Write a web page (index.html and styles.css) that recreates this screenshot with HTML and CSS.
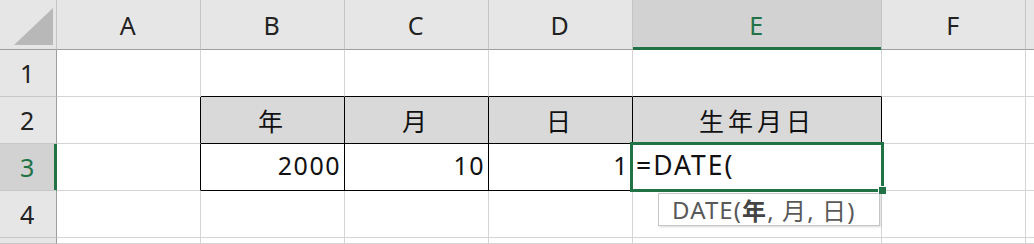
FILE: index.html
```html
<!DOCTYPE html>
<html lang="ja">
<head>
    <meta charset="UTF-8">
    <title>DATE</title>
    <link rel="stylesheet" href="styles.css">
</head>
<body>

    <div class="sheet">
        <!-- column headers -->
        <div class="cell corner">
            <svg width="56" height="49" viewBox="0 0 56 49"><polygon points="53,8 53,45 14,45" fill="#b8b8b8"/></svg>
        </div>
        <div class="cell col-head">A</div>
        <div class="cell col-head">B</div>
        <div class="cell col-head">C</div>
        <div class="cell col-head">D</div>
        <div class="cell col-head sel-col">E</div>
        <div class="cell col-head">F</div>
        <div class="cell col-head"></div>

        <!-- row 1 -->
        <div class="cell row-head">1</div>
        <div class="cell"></div>
        <div class="cell line-b"></div>
        <div class="cell line-b"></div>
        <div class="cell line-b"></div>
        <div class="cell line-b"></div>
        <div class="cell"></div>
        <div class="cell"></div>

        <!-- row 2 -->
        <div class="cell row-head">2</div>
        <div class="cell line-r"></div>
        <div class="cell th line-r line-b">年</div>
        <div class="cell th line-r line-b">月</div>
        <div class="cell th line-r line-b">日</div>
        <div class="cell th line-r line-b">生年月日</div>
        <div class="cell"></div>
        <div class="cell"></div>

        <!-- row 3 -->
        <div class="cell row-head sel-row">3</div>
        <div class="cell line-r"></div>
        <div class="cell num line-r line-b">2000</div>
        <div class="cell num line-r line-b">10</div>
        <div class="cell num line-r line-b">1</div>
        <div class="cell edit line-r line-b">=DATE(</div>
        <div class="cell"></div>
        <div class="cell"></div>

        <!-- row 4 -->
        <div class="cell row-head">4</div>
        <div class="cell"></div>
        <div class="cell"></div>
        <div class="cell"></div>
        <div class="cell"></div>
        <div class="cell tip-host">
            <div class="tooltip">DATE(<b>年</b>, 月, 日)</div>
        </div>
        <div class="cell"></div>
        <div class="cell"></div>

        <!-- row 5 (cut off) -->
        <div class="cell row-head"></div>
        <div class="cell"></div>
        <div class="cell"></div>
        <div class="cell"></div>
        <div class="cell"></div>
        <div class="cell"></div>
        <div class="cell"></div>
        <div class="cell"></div>
    </div>

</body>
</html>
```

FILE: styles.css
```css
body {
    margin: 0;
    padding: 0;
    background-color: #fff;
    font-family: 'Noto Sans', 'Noto Sans CJK JP', sans-serif;
    overflow: hidden;
}

.sheet {
    display: grid;
    grid-template-columns: 57px 144px 144px 144px 144px 249px 144px 1fr;
    grid-template-rows: 50px 47px 47px 47px 47px 1fr;
    height: 244px;
}

.cell {
    display: flex;
    align-items: center;
    padding: 0 4px;
    font-size: 25px;
    letter-spacing: 1.5px;
    color: #111;
    border-right: 1px solid #d4d4d4;
    border-bottom: 1px solid #d4d4d4;
    white-space: nowrap;
}

.corner {
    padding: 0;
    background-color: #e6e6e6;
    border-right-color: #c4c4c4;
    border-bottom-color: #9e9e9e;
}

.corner svg {
    display: block;
}

.col-head {
    justify-content: center;
    background-color: #e6e6e6;
    border-right-color: #c4c4c4;
    border-bottom-color: #9e9e9e;
    color: #222;
}

.row-head {
    justify-content: center;
    background-color: #e6e6e6;
    border-right-color: #9e9e9e;
    border-bottom-color: #c8c8c8;
    color: #222;
}

.sel-col {
    background-color: #d2d2d2;
    color: #217346;
    border-bottom-color: #217346;
    box-shadow: inset 0 -2px 0 #217346;
}

.sel-row {
    background-color: #d2d2d2;
    color: #217346;
    border-right-color: #217346;
    box-shadow: inset -2px 0 0 #217346;
}

.line-r {
    border-right-color: #000;
}

.line-b {
    border-bottom-color: #000;
}

.th {
    justify-content: center;
    background-color: #d9d9d9;
    letter-spacing: 4px;
}

.num {
    justify-content: flex-end;
    padding-right: 3px;
    padding-bottom: 4px;
}

.edit {
    position: relative;
    padding-left: 3px;
    padding-bottom: 4px;
    font-size: 26.5px;
    letter-spacing: 2px;
}

/* active cell frame and fill handle */
.edit::after {
    content: '';
    position: absolute;
    left: -3px;
    top: -2px;
    right: -3px;
    bottom: -2px;
    border: 3px solid #217346;
}

.edit::before {
    content: '';
    position: absolute;
    right: -5px;
    bottom: -4px;
    width: 7px;
    height: 7px;
    background-color: #217346;
    border-left: 1px solid #fff;
    border-top: 1px solid #fff;
    z-index: 1;
}

.tip-host {
    position: relative;
}

.tooltip {
    position: absolute;
    left: 25px;
    top: 2px;
    width: 222px;
    height: 33px;
    box-sizing: border-box;
    display: flex;
    align-items: center;
    padding-left: 13px;
    background-color: #fff;
    border: 1px solid #c6c6c6;
    box-shadow: 1px 1px 2px rgba(0, 0, 0, 0.15);
    font-size: 24px;
    letter-spacing: 1.1px;
    color: #595959;
}

.tooltip b {
    font-weight: 700;
    color: #444;
}
```
